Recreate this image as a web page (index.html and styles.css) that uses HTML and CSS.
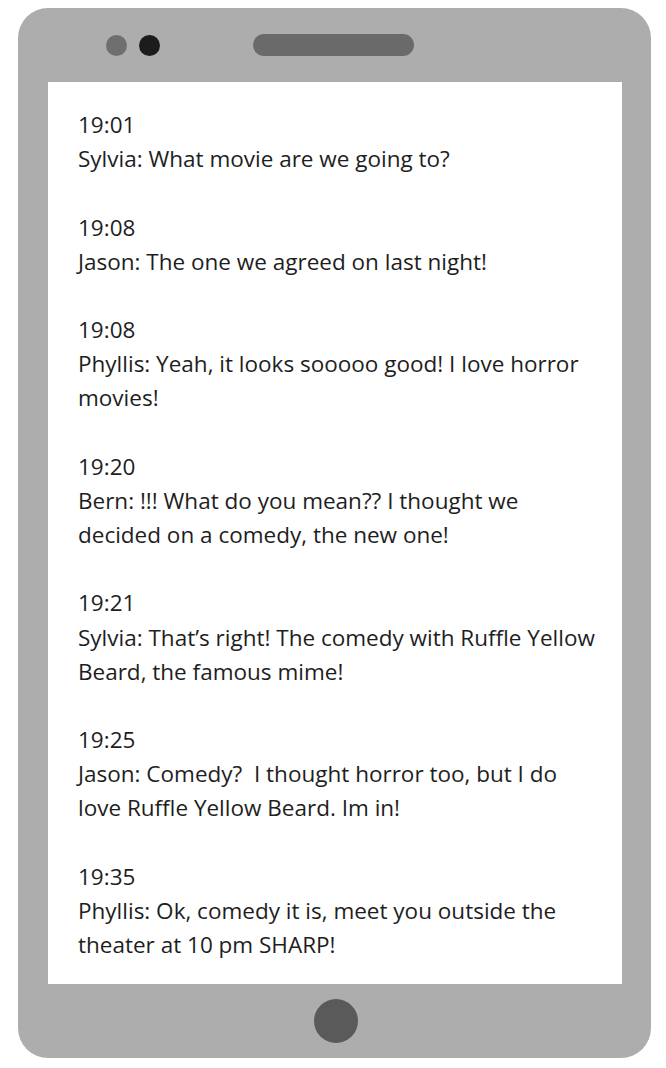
FILE: index.html
```html
<!DOCTYPE html>
<html lang="en">
<head>
<meta charset="utf-8">
<title>Chat</title>
<link rel="stylesheet" href="styles.css">
</head>
<body>
<div class="phone">
  <div class="phone-top">
    <span class="cam cam-light"></span>
    <span class="cam cam-dark"></span>
    <span class="speaker"></span>
  </div>
  <div class="screen">
    <p class="msg"><span class="time">19:01</span><br>Sylvia: What movie are we going to?</p>
    <p class="msg"><span class="time">19:08</span><br>Jason: The one we agreed on last night!</p>
    <p class="msg"><span class="time">19:08</span><br>Phyllis: Yeah, it looks sooooo good! I love horror<br>movies!</p>
    <p class="msg"><span class="time">19:20</span><br>Bern: !!! What do you mean?? I thought we<br>decided on a comedy, the new one!</p>
    <p class="msg"><span class="time">19:21</span><br>Sylvia: That’s right! The comedy with Ruffle Yellow<br>Beard, the famous mime!</p>
    <p class="msg"><span class="time">19:25</span><br>Jason: Comedy?&nbsp; I thought horror too, but I do<br>love Ruffle Yellow Beard. Im in!</p>
    <p class="msg"><span class="time">19:35</span><br>Phyllis: Ok, comedy it is, meet you outside the<br>theater at 10 pm SHARP!</p>
  </div>
  <div class="phone-bottom">
    <span class="home"></span>
  </div>
</div>
</body>
</html>
```
FILE: styles.css
```css
html, body {
  margin: 0;
  padding: 0;
  background: #ffffff;
}

body {
  width: 666px;
  height: 1068px;
  overflow: hidden;
}

.phone {
  margin: 8px 0 0 18px;
  width: 633px;
  height: 1050px;
  box-sizing: border-box;
  background: #adadad;
  border-radius: 30px;
  display: flex;
  flex-direction: column;
}

.phone-top {
  height: 74px;
  display: flex;
  align-items: center;
  padding-left: 88px;
  flex: none;
}

.cam {
  width: 21px;
  height: 21px;
  border-radius: 50%;
}

.cam-light {
  background: #6f6f6f;
}

.cam-dark {
  background: #1c1c1c;
  margin-left: 12px;
}

.speaker {
  width: 161px;
  height: 22px;
  border-radius: 11px;
  background: #6a6a6a;
  margin-left: 93px;
}

.screen {
  margin: 0 29px 0 30px;
  height: 902px;
  background: #ffffff;
  box-sizing: border-box;
  padding: 26px 0 0 30px;
  font-family: "Open Sans", sans-serif;
  font-size: 22.5px;
  line-height: 34.17px;
  color: #1e1e1e;
  flex: none;
}

.msg {
  margin: 0 0 34.17px 0;
  white-space: nowrap;
}

.phone-bottom {
  flex: 1;
  display: flex;
  justify-content: center;
  align-items: center;
  padding-left: 3px;
}

.home {
  width: 44px;
  height: 44px;
  border-radius: 50%;
  background: #5a5a5a;
}
```
